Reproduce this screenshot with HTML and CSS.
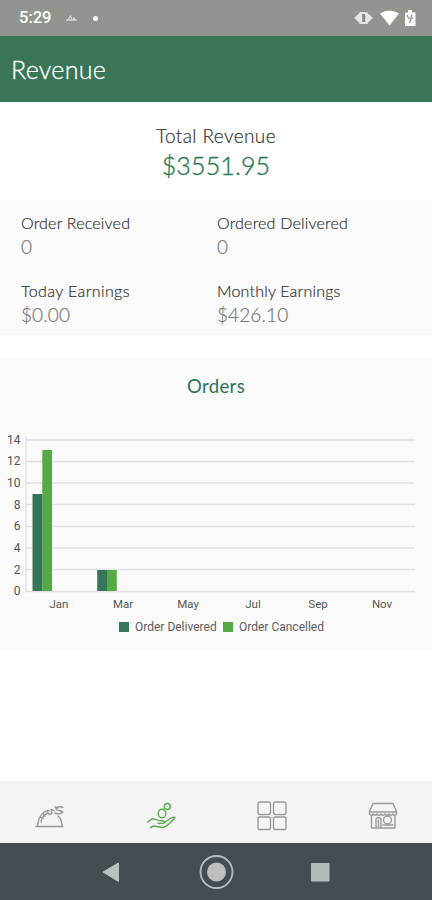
FILE: index.html
```html
<!DOCTYPE html>
<html lang="en">
<head>
  <meta charset="UTF-8">
  <meta name="viewport" content="width=device-width, initial-scale=1.0">
  <title>Revenue</title>
  <link rel="stylesheet" href="styles.css">
</head>
<body>
  <div class="status-bar">
    <span class="time">5:29</span>
    <svg class="notify" width="11" height="8" viewBox="0 0 11 8"><path d="M0 6h11M2.500 5l2-3 1.500 3M7 4.500h2" fill="none" stroke="#d5d7d2" stroke-width="1.300"/></svg>
    <span class="dot"></span>
    <svg class="status-icons" width="64" height="18" viewBox="0 0 64 18">
      <path d="M0 9l5-4.500v9zM19 9l-5-4.500v9z" fill="#e4e6e2"/>
      <rect x="5" y="3" width="9" height="12" rx="1.500" fill="#e4e6e2"/>
      <rect x="8.200" y="5" width="3" height="8" fill="#858882"/>
      <path d="M26 4.500q9.500-6 19 0L35.500 16.500z" fill="#fff"/>
      <path d="M51 3.500h3V1h4v2.500h3.500v13.500H51z" fill="#fff"/>
      <path d="M53 6l1.500 3 2.500 1-1.500 4M58 5.500l-1 3 2 1" fill="none" stroke="#92958e" stroke-width="1.200"/>
    </svg>
  </div>

  <header class="app-bar">
    <h1>Revenue</h1>
  </header>

  <main>
    <section class="total">
      <div class="total-label">Total Revenue</div>
      <div class="total-value">$3551.95</div>
    </section>

    <section class="stats">
      <div class="stat">
        <div class="stat-label">Order Received</div>
        <div class="stat-value">0</div>
      </div>
      <div class="stat">
        <div class="stat-label">Ordered Delivered</div>
        <div class="stat-value">0</div>
      </div>
      <div class="stat">
        <div class="stat-label today">Today Earnings</div>
        <div class="stat-value">$0.00</div>
      </div>
      <div class="stat">
        <div class="stat-label">Monthly Earnings</div>
        <div class="stat-value">$426.10</div>
      </div>
    </section>

    <section class="orders">
      <h2>Orders</h2>
      <svg class="chart" width="432" height="180" viewBox="0 430 432 180">
        <g class="grid">
          <path d="M26 440h389M26 461.500h389M26 483h389M26 504.500h389M26 526.500h389M26 548h389M26 569.500h389M26 591.500h389"/>
          <path d="M26 437v155"/>
        </g>
        <rect class="bar-delivered" x="32.500" y="494" width="10" height="97"/>
        <rect class="bar-cancelled" x="42.300" y="450" width="9.700" height="141"/>
        <rect class="bar-delivered" x="97.200" y="570" width="10" height="21"/>
        <rect class="bar-cancelled" x="107" y="570" width="9.800" height="21"/>
        <g class="y-labels">
          <text x="20.500" y="443.500">14</text>
          <text x="20.500" y="465">12</text>
          <text x="20.500" y="487">10</text>
          <text x="20.500" y="508.500">8</text>
          <text x="20.500" y="530">6</text>
          <text x="20.500" y="552">4</text>
          <text x="20.500" y="573.500">2</text>
          <text x="20.500" y="595">0</text>
        </g>
        <g class="x-labels">
          <text x="59" y="607.500">Jan</text>
          <text x="123" y="607.500">Mar</text>
          <text x="188" y="607.500">May</text>
          <text x="253" y="607.500">Jul</text>
          <text x="318" y="607.500">Sep</text>
          <text x="382" y="607.500">Nov</text>
        </g>
      </svg>
      <div class="legend">
        <span class="swatch"></span><span class="legend-text">Order Delivered</span>
        <span class="swatch cancelled"></span><span class="legend-text">Order Cancelled</span>
      </div>
    </section>
  </main>

  <nav class="tabs">
    <a class="tab">
      <svg width="32" height="32" viewBox="0 0 32 32">
        <path d="M2 26.500h27M3.500 26v-2.500M28 26v-2.500M4 24c.5-6 3-10 7-12.500l4-1M24 16c2.500 2 3.500 5 3.700 8M7 22c.5-4 3-7 6-8.500M6 17l3 1M9 13.500l2 3M13 11l2 3.500 3-1-1-4M18 9.500l2.500 1.500M29 7.500c-3-1.500-7-.5-7 1.500s6 1 6 3-4 2.500-7 1M21 7l3 1M27 13l2-1"/>
      </svg>
    </a>
    <a class="tab active">
      <svg width="32" height="32" viewBox="0 0 32 32">
        <ellipse cx="17" cy="13.500" rx="3.800" ry="4.300"/>
        <circle cx="22.300" cy="6.500" r="3"/>
        <path d="M2.500 22l5-3.300 6 1.700 4.500.6c2 .3 1.500 2.500-1 2.500l-4-.2M5.500 27.500l3-1.500 9 1.500c3-.5 5-2.500 7-4l5.500-6c-1.500-1-3 0-4.500 1L19 23"/>
      </svg>
    </a>
    <a class="tab">
      <svg width="32" height="32" viewBox="0 0 32 32">
        <rect x="2" y="2" width="12.500" height="12.500" rx="2"/>
        <rect x="17.500" y="2" width="12.500" height="12.500" rx="2"/>
        <rect x="2" y="17" width="12.500" height="12.500" rx="2"/>
        <rect x="17.500" y="17" width="12.500" height="12.500" rx="2"/>
      </svg>
    </a>
    <a class="tab">
      <svg width="32" height="32" viewBox="0 0 32 32">
        <path d="M6 3.500h20l3.500 8v2.500q-1.800 2.500-3.700 0-1.900 2.500-3.800 0-2 2.500-4 0-2 2.500-4 0-2 2.500-4 0-1.900 2.500-3.800 0-1.800 2.500-3.700 0v-2.500zM2.500 12h27M4.500 16v12h23.500V16M9 28v-9q2.500-3 5 0v9M11.500 20v8"/>
        <circle cx="20.500" cy="20" r="4"/>
        <path d="M16 25h10"/>
      </svg>
    </a>
  </nav>

  <footer class="system-nav">
    <svg width="432" height="57" viewBox="0 0 432 57">
      <path d="M103 29l15.500-9v18.500z" fill="#bbc0c1" stroke="#bbc0c1" stroke-linejoin="round"/>
      <circle cx="216.500" cy="29" r="16" fill="none" stroke="#b7bdbe" stroke-width="1.800"/>
      <circle cx="216.500" cy="29" r="9.500" fill="#bbc0c1"/>
      <rect x="311" y="20" width="18.500" height="18.500" rx="1" fill="#b4babb"/>
    </svg>
  </footer>
</body>
</html>
```
FILE: styles.css
```css
* { box-sizing: border-box; }
body { margin: 0; height: 900px; display: flex; flex-direction: column; background: #fff; font-family: Lato, sans-serif; font-weight: 300; color: #333; overflow: hidden; }
svg { display: block; }

.status-bar { height: 36px; display: flex; align-items: center; padding: 0 14px 0 19px; background: #92958e; }
.time { width: 33px; font: 500 16.500px/20px Roboto, sans-serif; color: #fff; }
.notify { margin-left: 14px; }
.dot { width: 5px; height: 5px; margin-left: 16px; border-radius: 50%; background: #fff; }
.status-icons { margin-left: auto; }

.app-bar { height: 66px; padding: 16px 11px 0; background: #397557; }
.app-bar h1 { margin: 0; font-size: 25px; line-height: 34px; font-weight: 300; letter-spacing: 0.3px; color: #fff; -webkit-text-stroke: 0.3px; }

main { height: 679px; }
.total { height: 98px; padding-top: 21px; text-align: center; }
.total-label { font-size: 19px; line-height: 26px; letter-spacing: 0.4px; -webkit-text-stroke: 0.2px; }
.total-value { font-size: 25px; line-height: 33px; letter-spacing: 0.15px; color: #2b7b57; -webkit-text-stroke: 0.4px; }

.stats { height: 135px; display: grid; grid-template-columns: 196px 1fr; grid-template-rows: 68px 67px; padding-left: 21px; background: #fafafa; }
.stat { padding-top: 12px; }
.stat-label { font-size: 16px; line-height: 22px; letter-spacing: 0.2px; -webkit-text-stroke: 0.2px; }
.stat-label.today { letter-spacing: 0.4px; }
.stat-value { font-size: 19px; line-height: 25px; letter-spacing: 0.1px; color: #777; -webkit-text-stroke: 0.2px; }

.orders { height: 291px; margin-top: 24px; background: #fafafa; }
.orders h2 { margin: 0; height: 71px; padding-top: 15px; font-size: 18.500px; line-height: 24px; font-weight: 400; letter-spacing: 0.4px; text-align: center; color: #2b7358; }
.grid path { fill: none; stroke: #e1e1e1; stroke-width: 1.300; }
.bar-delivered { fill: #35765a; }
.bar-cancelled { fill: #55aa46; }
.chart text { font: 12px Roboto, sans-serif; fill: #555; }
.y-labels { text-anchor: end; }
.x-labels { text-anchor: middle; }
.chart .x-labels text { font-size: 11.500px; }
.legend { height: 34px; display: flex; align-items: center; padding-left: 119px; font: 12px/16px Roboto, sans-serif; color: #606060; }
.legend-text { width: 82px; margin: 0 6px; white-space: nowrap; }
.swatch { width: 10px; height: 10px; background: #35765a; }
.swatch.cancelled { background: #55aa46; }

.tabs { height: 62px; display: flex; padding-top: 19px; background: #f4f4f4; }
.tab { flex: 0 0 111px; padding-left: 34px; }
.tab svg { fill: none; stroke: #999; stroke-width: 1.400; stroke-linecap: round; stroke-linejoin: round; }
.tab.active svg { stroke: #58ad4d; }

.system-nav { height: 57px; background: #464d52; }
```
